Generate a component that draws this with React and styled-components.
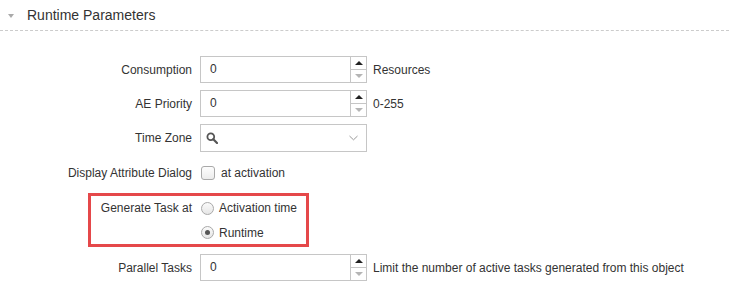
import React from 'react';
import styled, { createGlobalStyle } from 'styled-components';

const GlobalStyle = createGlobalStyle`
  body {
    margin: 0;
    background: #fff;
    font-family: "Liberation Sans", Arial, sans-serif;
    color: #333;
  }
`;

const Panel = styled.div`
  width: 729px;
  height: 302px;
  overflow: hidden;
`;

const SectionHeader = styled.div`
  display: flex;
  align-items: center;
  height: 30px;
  border-bottom: 1px dashed #ccc;
  font-size: 14px;
  color: #333;
`;

const Caret = styled.span`
  width: 0;
  height: 0;
  margin: 1px 13px 0 8px;
  border-left: 3.5px solid transparent;
  border-right: 3.5px solid transparent;
  border-top: 4px solid #aaa;
`;

const Form = styled.div`
  display: flex;
  flex-direction: column;
  gap: 7px;
  padding-top: 25px;
`;

const Row = styled.div`
  display: grid;
  grid-template-columns: ${(p) => p.$labelWidth || 200}px auto;
  align-items: center;
  min-height: ${(p) => p.$height || 27}px;
`;

const Label = styled.div`
  text-align: right;
  padding-right: 8px;
  font-size: 12px;
  white-space: nowrap;
`;

const Field = styled.div`
  display: flex;
  align-items: center;
  font-size: 12px;
  white-space: nowrap;
`;

const NumberBox = styled.div`
  display: flex;
  width: 167px;
  height: 27px;
  box-sizing: border-box;
  border: 1px solid #c6c6c6;
  margin-right: 6px;
`;

const NumberText = styled.div`
  flex: 1;
  padding-left: 9px;
  line-height: 25px;
  font-size: 12px;
`;

const Spinner = styled.div`
  display: flex;
  flex-direction: column;
  width: 15px;
  border-left: 1px solid #c6c6c6;
`;

const SpinButton = styled.div`
  flex: 1;
  display: flex;
  align-items: center;
  justify-content: center;
  & + & {
    border-top: 1px solid #c6c6c6;
  }
  &::after {
    content: '';
    width: 0;
    height: 0;
    border-left: 4px solid transparent;
    border-right: 4px solid transparent;
    ${(p) =>
      p.$down
        ? 'border-top: 4px solid #b5b5b5;'
        : 'border-bottom: 4px solid #222;'}
  }
`;

const SelectBox = styled.div`
  display: flex;
  align-items: center;
  justify-content: space-between;
  width: 167px;
  height: 28px;
  box-sizing: border-box;
  border: 1px solid #c6c6c6;
  padding: 0 8px 0 5px;
`;

const Checkbox = styled.span`
  width: 14px;
  height: 14px;
  box-sizing: border-box;
  margin: 0 6px 0 1px;
  border: 1px solid #a9a9a9;
  border-radius: 3px;
  background: linear-gradient(#fdfdfd, #ececec);
`;

const Highlight = styled.div`
  margin-left: 88px;
  width: 221px;
  box-sizing: border-box;
  border: 3px solid #e5484a;
  display: flex;
  flex-direction: column;
  gap: 1px;
`;

const Radio = styled.span`
  position: relative;
  width: 13px;
  height: 13px;
  box-sizing: border-box;
  margin: 0 5px 0 1px;
  border: 1px solid #a9a9a9;
  border-radius: 50%;
  background: linear-gradient(#fafafa, #e6e6e6);
  ${(p) =>
    p.$checked &&
    `&::after {
      content: '';
      position: absolute;
      left: 3px;
      top: 3px;
      width: 5px;
      height: 5px;
      border-radius: 50%;
      background: #555;
    }`}
`;

const SearchIcon = () => (
  <svg width="12" height="12" viewBox="0 0 12 12">
    <circle cx="4.8" cy="4.8" r="3.4" fill="none" stroke="#555" strokeWidth="1.8" />
    <line x1="7.3" y1="7.3" x2="11" y2="11" stroke="#555" strokeWidth="2.2" strokeLinecap="round" />
  </svg>
);

const Chevron = () => (
  <svg width="9" height="6" viewBox="0 0 9 6">
    <polyline points="0.5,1 4.5,4.8 8.5,1" fill="none" stroke="#999" strokeWidth="1" />
  </svg>
);

const NumberField = ({ value, hint }) => (
  <Field>
    <NumberBox>
      <NumberText>{value}</NumberText>
      <Spinner>
        <SpinButton />
        <SpinButton $down />
      </Spinner>
    </NumberBox>
    {hint}
  </Field>
);

const App = () => (
  <Panel>
    <GlobalStyle />
    <SectionHeader>
      <Caret />
      Runtime Parameters
    </SectionHeader>
    <Form>
      <Row>
        <Label>Consumption</Label>
        <NumberField value="0" hint="Resources" />
      </Row>
      <Row>
        <Label>AE Priority</Label>
        <NumberField value="0" hint="0-255" />
      </Row>
      <Row>
        <Label>Time Zone</Label>
        <Field>
          <SelectBox>
            <SearchIcon />
            <Chevron />
          </SelectBox>
        </Field>
      </Row>
      <Row>
        <Label>Display Attribute Dialog</Label>
        <Field>
          <Checkbox />
          at activation
        </Field>
      </Row>
      <Highlight>
        <Row $labelWidth={109} $height={24}>
          <Label>Generate Task at</Label>
          <Field>
            <Radio />
            Activation time
          </Field>
        </Row>
        <Row $labelWidth={109} $height={23}>
          <span />
          <Field>
            <Radio $checked />
            Runtime
          </Field>
        </Row>
      </Highlight>
      <Row>
        <Label>Parallel Tasks</Label>
        <NumberField value="0" hint="Limit the number of active tasks generated from this object" />
      </Row>
    </Form>
  </Panel>
);

export default App;
